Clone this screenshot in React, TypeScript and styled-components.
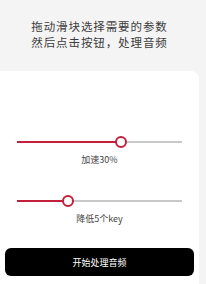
import React from 'react';
import styled, { createGlobalStyle } from 'styled-components';

const GlobalStyle = createGlobalStyle`
  html, body {
    margin: 0;
    padding: 0;
    background: #f4f4f4;
    font-family: "Noto Sans CJK SC", "Noto Sans", sans-serif;
  }
`;

const Page = styled.div`
  width: 206px;
  height: 284px;
  overflow: hidden;
  display: flex;
  flex-direction: column;
`;

const Intro = styled.div`
  width: 199px;
  padding-top: 19px;
  height: 52px;
  text-align: center;
  font-size: 11.5px;
  letter-spacing: 0.9px;
  line-height: 15.5px;
  color: #3c3c3c;
`;

const Card = styled.div`
  width: 199px;
  flex: 1;
  background: #ffffff;
  border-radius: 0 8px 0 0;
  padding: 65px 0 0;
  box-sizing: border-box;
  display: flex;
  flex-direction: column;
`;

const SliderBlock = styled.div<{ $gapAfter: number }>`
  display: flex;
  flex-direction: column;
  align-items: center;
  margin-bottom: ${({ $gapAfter }) => $gapAfter}px;
`;

const Track = styled.div`
  position: relative;
  width: 165px;
  height: 12px;
  display: flex;
  align-items: center;
`;

const Filled = styled.div`
  height: 2px;
  background: #c41f3b;
`;

const Rest = styled.div`
  height: 2px;
  flex: 1;
  background: #c9c9c9;
`;

const Thumb = styled.div`
  position: absolute;
  top: 0;
  width: 12px;
  height: 12px;
  margin-left: -6px;
  box-sizing: border-box;
  border: 2px solid #c41f3b;
  border-radius: 50%;
  background: #ffffff;
`;

const Label = styled.div`
  margin-top: 6px;
  font-size: 9px;
  line-height: 12px;
  color: #444444;
`;

const Button = styled.button`
  margin: 0 5px;
  height: 28px;
  border: none;
  border-radius: 6px;
  background: #000000;
  color: #ffffff;
  font-family: inherit;
  font-size: 9px;
  padding: 0;
`;

type SliderProps = { fraction: number; label: string; gapAfter: number };

const Slider: React.FC<SliderProps> = ({ fraction, label, gapAfter }) => {
  const pos = fraction * 165;
  return (
    <SliderBlock $gapAfter={gapAfter}>
      <Track>
        <Filled style={{ width: pos }} />
        <Rest />
        <Thumb style={{ left: pos }} />
      </Track>
      <Label>{label}</Label>
    </SliderBlock>
  );
};

export default function App() {
  return (
    <>
      <GlobalStyle />
      <Page>
        <Intro>
          拖动滑块选择需要的参数
          <br />
          然后点击按钮，处理音频
        </Intro>
        <Card>
          <Slider fraction={0.63} label="加速30%" gapAfter={29} />
          <Slider fraction={0.31} label="降低5个key" gapAfter={23} />
          <Button>开始处理音频</Button>
        </Card>
      </Page>
    </>
  );
}
